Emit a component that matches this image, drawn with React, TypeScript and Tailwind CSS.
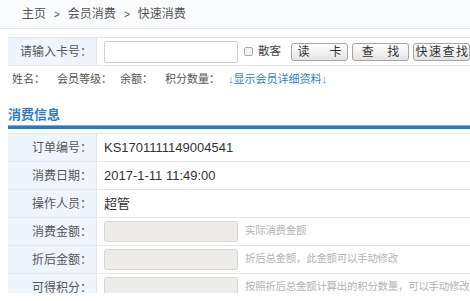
import React from "react";

const font = { fontFamily: '"Liberation Sans", "Noto Sans CJK SC", sans-serif' };

interface RowProps {
  label: string;
  children: React.ReactNode;
}

const Row: React.FC<RowProps> = ({ label, children }) => (
  <div className="flex h-[28px] border-b border-[#e6e6e6]">
    <div className="w-[89px] shrink-0 bg-[#eef5fc] border-r border-[#e3e8ee] flex items-center justify-end pr-[4px] text-[12px] text-[#555]">
      {label}：
    </div>
    <div className="flex-1 flex items-center pl-[7px] text-[13px] text-[#333]">{children}</div>
  </div>
);

const InputRow: React.FC<{ label: string; hint: string }> = ({ label, hint }) => (
  <Row label={label}>
    <div className="w-[134px] h-[21px] rounded-[3px] border border-[#d6d6d6] bg-[#edece8] shrink-0" />
    <span className="ml-[7px] self-start mt-[5px] text-[10.5px] tracking-[-0.3px] text-[#b3b3b3] whitespace-nowrap">
      {hint}
    </span>
  </Row>
);

const Btn: React.FC<{ children: React.ReactNode; className?: string }> = ({ children, className }) => (
  <button
    className={
      "h-[18px] w-[57px] shrink-0 rounded-[3px] border border-[#a5a5a5] bg-gradient-to-b from-white to-[#e3e3e3] text-[12px] text-[#333] leading-none flex items-center justify-center whitespace-pre " +
      (className || "")
    }
  >
    {children}
  </button>
);

export default function App() {
  return (
    <div className="w-[470px] h-[293px] overflow-hidden bg-white" style={font}>
      <div className="h-[29px] bg-[#f9fbfd] border-b border-[#e4e8ec] flex items-center pl-[22px] text-[12px] text-[#555]">
        <span>主页</span>
        <span className="mx-[8px] text-[10px]">&gt;</span>
        <span>会员消费</span>
        <span className="mx-[8px] text-[10px]">&gt;</span>
        <span>快速消费</span>
      </div>

      <div className="ml-[8px] mt-[8px] flex h-[29px] border-y border-[#e6e6e6]">
        <div className="w-[89px] shrink-0 bg-[#eef5fc] border-r border-[#e3e8ee] flex items-center justify-end pr-[4px] text-[12px] text-[#555]">
          请输入卡号：
        </div>
        <div className="flex items-center pl-[7px] whitespace-nowrap">
          <div className="w-[134px] h-[22px] shrink-0 rounded-[2px] border border-[#cfcfcf] bg-white" />
          <span className="ml-[6px] w-[9px] h-[9px] shrink-0 rounded-[2px] border border-[#aaa] bg-[#f4f4f4]" />
          <span className="ml-[5px] shrink-0 text-[11.5px] text-[#444]">散客</span>
          <div className="ml-[10px] flex gap-[4px] shrink-0">
            <Btn>{"读      卡"}</Btn>
            <Btn>{"查    找"}</Btn>
            <Btn className="tracking-[1.5px] pl-[2px]">{"快速查找"}</Btn>
          </div>
        </div>
      </div>

      <div className="ml-[12px] mt-[6px] flex items-center text-[11px] text-[#555] h-[14px]">
        <span className="w-[45px]">姓名：</span>
        <span className="w-[63px]">会员等级：</span>
        <span className="w-[45px]">余额：</span>
        <span className="w-[63px]">积分数量：</span>
        <span className="text-[#2f7fd0]">↓显示会员详细资料↓</span>
      </div>

      <div className="ml-[8px] mt-[21px] text-[13px] font-bold text-[#2d7bc0] leading-[15px]">消费信息</div>
      <div className="ml-[8px] mt-[3px] h-[4px] bg-[#2a79bd] border-t border-[#78b0df]" />

      <div className="ml-[8px] mt-[4px] border-t border-[#e6e6e6]">
        <Row label="订单编号">KS1701111149004541</Row>
        <Row label="消费日期">2017-1-11 11:49:00</Row>
        <Row label="操作人员">超管</Row>
        <InputRow label="消费金额" hint="实际消费金额" />
        <InputRow label="折后金额" hint="折后总金额，此金额可以手动修改" />
        <InputRow label="可得积分" hint="按照折后总金额计算出的积分数量，可以手动修改" />
      </div>
    </div>
  );
}
